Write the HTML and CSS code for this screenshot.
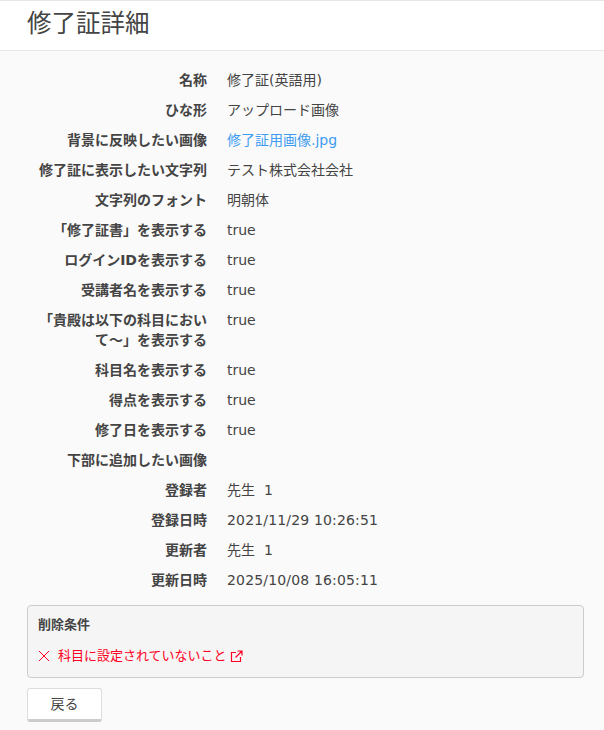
FILE: index.html
```html
<!DOCTYPE html>
<html lang="ja">

<head>
    <meta charset="UTF-8">
    <meta name="viewport" content="width=device-width, initial-scale=1.0">
    <title>修了証詳細</title>
    <link rel="stylesheet" href="styles.css">
</head>

<body>
    <header class="page-head">
        <h1>修了証詳細</h1>
    </header>

    <div class="content">
        <dl class="detail">
            <div class="row"><dt>名称</dt><dd>修了証(英語用)</dd></div>
            <div class="row"><dt>ひな形</dt><dd>アップロード画像</dd></div>
            <div class="row"><dt>背景に反映したい画像</dt><dd><a href="#">修了証用画像.jpg</a></dd></div>
            <div class="row"><dt>修了証に表示したい文字列</dt><dd>テスト株式会社会社</dd></div>
            <div class="row"><dt>文字列のフォント</dt><dd>明朝体</dd></div>
            <div class="row"><dt>「修了証書」を表示する</dt><dd>true</dd></div>
            <div class="row"><dt>ログインIDを表示する</dt><dd>true</dd></div>
            <div class="row"><dt>受講者名を表示する</dt><dd>true</dd></div>
            <div class="row"><dt>「貴殿は以下の科目において～」を表示する</dt><dd>true</dd></div>
            <div class="row"><dt>科目名を表示する</dt><dd>true</dd></div>
            <div class="row"><dt>得点を表示する</dt><dd>true</dd></div>
            <div class="row"><dt>修了日を表示する</dt><dd>true</dd></div>
            <div class="row"><dt>下部に追加したい画像</dt><dd></dd></div>
            <div class="row"><dt>登録者</dt><dd>先生&nbsp;&nbsp;1</dd></div>
            <div class="row"><dt>登録日時</dt><dd class="date">2021/11/29 10:26:51</dd></div>
            <div class="row"><dt>更新者</dt><dd>先生&nbsp;&nbsp;1</dd></div>
            <div class="row"><dt>更新日時</dt><dd class="date">2025/10/08 16:05:11</dd></div>
        </dl>

        <div class="condition">
            <h2>削除条件</h2>
            <p class="ng">
                <svg class="icon-x" width="12" height="12" viewBox="0 0 12 12"><path d="M1 1L11 11M11 1L1 11" stroke="#f02" stroke-width="1" fill="none"/></svg>
                <a href="#">科目に設定されていないこと</a>
                <svg class="icon-link" width="13" height="13" viewBox="0 0 13 13"><path d="M6 2.5H1.5V11.5H10.5V7M5.5 7.5L11.5 1.5M7.5 1H12V5.5" stroke="#f02" stroke-width="1.2" fill="none"/></svg>
            </p>
        </div>

        <button class="back" type="button">戻る</button>
    </div>
</body>

</html>
```

FILE: styles.css
```css
* {
    margin: 0;
    padding: 0;
    box-sizing: border-box;
}

body {
    background: #fafafa;
    color: #444;
    font-family: "DejaVu Sans", "Noto Sans CJK JP", sans-serif;
    font-size: 14px;
    line-height: 20px;
}

.page-head {
    height: 51px;
    padding-left: 27px;
    background: #fff;
    border-top: 1px solid #e6e6e6;
    border-bottom: 1px solid #e6e6e6;
}

.page-head h1 {
    font-size: 24.5px;
    font-weight: 400;
    line-height: 45px;
}

.content {
    padding: 14px 20px 0 27px;
}

.row {
    display: flex;
    gap: 20px;
    padding: 5px 0;
}

dt {
    width: 180px;
    flex-shrink: 0;
    text-align: right;
    font-weight: 700;
}

dd {
    flex: 1;
    min-height: 20px;
}

.date {
    letter-spacing: 0.16px;
}

a {
    color: #3f9cf0;
    text-decoration: none;
}

.condition {
    height: 73px;
    margin-top: 10px;
    padding: 9px 10px;
    background: #f5f5f5;
    border: 1px solid #ccc;
    border-radius: 4px;
}

.condition h2 {
    font-size: 13px;
    font-weight: 700;
}

.ng {
    display: flex;
    align-items: center;
    margin-top: 11px;
    color: #f02;
    font-size: 13px;
}

.ng a {
    color: #f02;
}

.icon-x {
    margin-right: 8px;
}

.icon-link {
    margin-left: 3px;
}

.back {
    display: block;
    width: 75px;
    height: 34px;
    margin-top: 10px;
    background: #fff;
    color: #444;
    border: 1px solid #ddd;
    border-bottom: 3px solid #ccc;
    border-radius: 3px;
    font: inherit;
    font-size: 14px;
}
```
